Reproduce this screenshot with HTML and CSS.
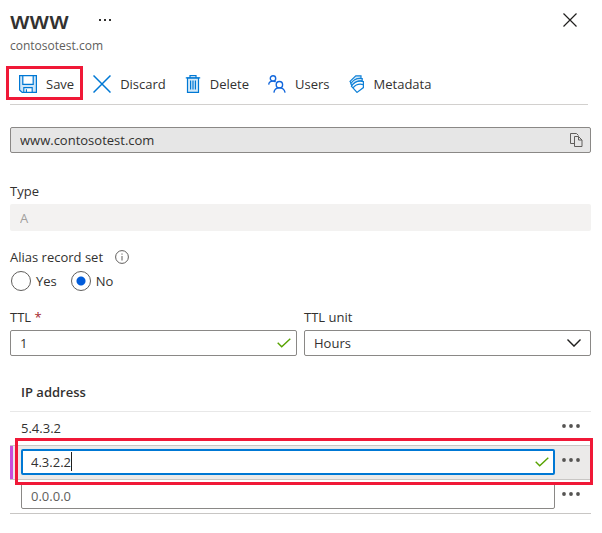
FILE: index.html
```html
<!DOCTYPE html>
<html lang="en">
<head>
<meta charset="utf-8">
<title>www - contosotest.com</title>
<link rel="stylesheet" href="styles.css">
</head>
<body>
<main class="blade">
  <header class="header">
    <div class="title-row">
      <h1 class="title">www</h1>
      <button class="more" type="button" aria-label="More options">
        <svg width="14" height="4" viewBox="0 0 14 4" fill="#323130"><rect x="1" y="1" width="2" height="2"/><rect x="6" y="1" width="2" height="2"/><rect x="11" y="1" width="2" height="2"/></svg>
      </button>
      <button class="close" type="button" aria-label="Close">
        <svg width="14" height="14" viewBox="0 0 14 14" fill="none" stroke="#201f1e" stroke-width="1.2"><path d="M.5.5l13 13M13.5.5l-13 13"/></svg>
      </button>
    </div>
    <p class="subtitle">contosotest.com</p>
  </header>

  <div class="toolbar" role="toolbar" aria-label="Record set commands">
    <button class="command highlighted" type="button">
      <svg width="18" height="18" viewBox="0 0 18 18" fill="none" stroke="#0078d4" stroke-width="1.2"><path fill="#cfe6f8" stroke="none" d="M1 1h3v9h10V1h3v16h-3v-5H4v5H1z"/><path d="M.6.6h16.8v16.8H3.2L.6 15zM3.8.6v8.8h10.4V.6M4.8 17v-4.4h8.4V17M7.4 14.2V17"/></svg>
      <span>Save</span>
    </button>
    <button class="command" type="button">
      <svg width="18" height="18" viewBox="0 0 18 18" fill="none" stroke="#0078d4" stroke-width="1.5"><path d="M.5.5l17 17M17.5.5l-17 17"/></svg>
      <span>Discard</span>
    </button>
    <button class="command" type="button">
      <svg width="16" height="18" viewBox="0 0 16 18" fill="none" stroke="#0078d4" stroke-width="1.2"><path fill="#d5eaf9" d="M2.5 3h11v14.4h-11z"/><path d="M.8 2.8h14.4M5 2.6V.6h6v2M5.6 5.6v9M8 5.6v9M10.4 5.6v9"/></svg>
      <span>Delete</span>
    </button>
    <button class="command" type="button">
      <svg width="18" height="18" viewBox="0 0 18 18" fill="none" stroke="#1267dc" stroke-width="1.4"><circle cx="5" cy="3.4" r="2.7"/><path d="M.7 9.600C.9 7.400 2.600 6.100 5 6.100c1 0 1.800.200 2.600.800"/><circle cx="11.400" cy="9.700" r="3.200"/><path d="M5.900 17.600c.400-2.800 2.700-4.700 5.500-4.700s5.100 1.900 5.700 4.700"/></svg>
      <span>Users</span>
    </button>
    <button class="command" type="button">
      <svg width="16" height="18" viewBox="0 0 16 18" fill="none" stroke="#0f80d7" stroke-width="1.2"><path fill="#d5eaf9" d="M1 6.400L6.800.800h5.200v2.400C8 3.200 4.600 5 2.600 9.200z"/><path fill="#d5eaf9" d="M1.800 8.800C4 4.800 8 3 13.200 3.600v2.400C9 5.600 5.800 7.200 3.400 11.400z"/><path fill="#fff" d="M2.400 11.200C5 7.200 9 5.400 14.400 6.600v6L8 17.400z"/><path d="M4 12.800c2.600-3.200 5.800-4.400 10.400-3.200"/></svg>
      <span>Metadata</span>
    </button>
  </div>

  <form class="form">
    <div class="box copy-box">
      <input class="box-input" type="text" value="www.contosotest.com" readonly aria-label="Record set name">
      <button class="icon-button" type="button" aria-label="Copy to clipboard">
        <svg width="13" height="14" viewBox="0 0 13 14" fill="none" stroke="#605e5c"><path d="M4 10.5H.5v-10h6l2 2M4.500 3.500h4l3.500 3.500v6.500h-7.500zM8.500 3.500v3.500h3.500"/></svg>
      </button>
    </div>

    <div class="field type-field">
      <label class="label" for="type">Type</label>
      <input class="disabled-input" id="type" type="text" value="A" disabled>
    </div>

    <fieldset class="alias">
      <legend class="label legend">Alias record set
        <svg class="info" width="14" height="14" viewBox="0 0 14 14" fill="none" stroke="#605e5c"><circle cx="7" cy="7" r="6.400"/><path d="M7 6v4.500M7 3.500v1.200"/></svg>
      </legend>
      <div class="radios">
        <label class="radio"><input type="radio" name="alias" value="yes">Yes</label>
        <label class="radio"><input type="radio" name="alias" value="no" checked>No</label>
      </div>
    </fieldset>

    <div class="ttl">
      <div class="field">
        <label class="label" for="ttl">TTL <span class="required">*</span></label>
        <div class="box">
          <input class="box-input" id="ttl" type="text" value="1">
          <svg class="check" width="14" height="10" viewBox="0 0 14 10" fill="none" stroke="#57a300" stroke-width="1.4"><path d="M.7 4.800l4 4L13.300.700"/></svg>
        </div>
      </div>
      <div class="field">
        <label class="label" for="unit">TTL unit</label>
        <div class="box">
          <select class="box-input" id="unit"><option>Hours</option></select>
          <svg class="chevron" width="14" height="8" viewBox="0 0 14 8" fill="none" stroke="#201f1e" stroke-width="1.400"><path d="M.5.600L7 7.100 13.500.600"/></svg>
        </div>
      </div>
    </div>

    <table class="records">
      <thead>
        <tr><th colspan="2" scope="col">IP address</th></tr>
      </thead>
      <tbody>
        <tr>
          <td class="address">5.4.3.2</td>
          <td class="actions"><button class="row-menu" type="button" aria-label="Row menu"><svg width="18" height="4" viewBox="0 0 18 4" fill="#555452"><circle cx="2" cy="2" r="1.900"/><circle cx="9" cy="2" r="1.900"/><circle cx="16" cy="2" r="1.900"/></svg></button></td>
        </tr>
        <tr class="editing">
          <td class="address">
            <div class="box focused">
              <input class="box-input" type="text" value="4.3.2.2" aria-label="IP address 2">
              <span class="caret"></span>
              <svg class="check" width="14" height="10" viewBox="0 0 14 10" fill="none" stroke="#57a300" stroke-width="1.400"><path d="M.7 4.800l4 4L13.300.700"/></svg>
            </div>
          </td>
          <td class="actions"><button class="row-menu" type="button" aria-label="Row menu"><svg width="18" height="4" viewBox="0 0 18 4" fill="#555452"><circle cx="2" cy="2" r="1.900"/><circle cx="9" cy="2" r="1.900"/><circle cx="16" cy="2" r="1.900"/></svg></button></td>
        </tr>
        <tr>
          <td class="address">
            <div class="box">
              <input class="box-input" type="text" placeholder="0.0.0.0" aria-label="New IP address">
            </div>
          </td>
          <td class="actions"><button class="row-menu" type="button" aria-label="Row menu"><svg width="18" height="4" viewBox="0 0 18 4" fill="#555452"><circle cx="2" cy="2" r="1.900"/><circle cx="9" cy="2" r="1.900"/><circle cx="16" cy="2" r="1.900"/></svg></button></td>
        </tr>
      </tbody>
    </table>
  </form>
</main>
</body>
</html>
```
FILE: styles.css
```css
*,
*::after {
  box-sizing: border-box;
}

body {
  margin: 0;
  background: #fff;
  color: #323130;
  font: 13px/20px "Open Sans", "Noto Sans", sans-serif;
}

button,
input,
select {
  margin: 0;
  padding: 0;
  border: 0;
  background: none;
  color: inherit;
  font: inherit;
}

svg {
  display: block;
  flex: none;
}

.blade {
  padding: 4px 11px 16px 10px;
}

.title-row {
  display: flex;
  align-items: center;
  height: 32px;
}

.title {
  margin: 0;
  font-size: 24px;
  line-height: 32px;
  font-weight: 600;
}

.more {
  margin-left: 29px;
}

.close {
  margin-left: auto;
  margin-right: 14px;
}

.subtitle {
  margin: 0;
  color: #605e5c;
  font-size: 12px;
}

.toolbar {
  display: flex;
  align-items: center;
  gap: 19px;
  height: 41px;
  margin: 8px 3px 0 0;
  padding-left: 9px;
  border-bottom: 1px solid #d2d0ce;
}

.command {
  position: relative;
  display: flex;
  align-items: center;
  gap: 9px;
}

.highlighted::after {
  content: "";
  position: absolute;
  inset: -8px -9px -6px -13px;
  border: 3px solid #f01837;
}

.form {
  padding-top: 22px;
}

.box {
  position: relative;
  display: flex;
  align-items: center;
  height: 26px;
  border: 1px solid #8a8886;
  border-radius: 2px;
  background: #fff;
}

.box-input {
  flex: 1;
  min-width: 0;
  height: 24px;
  padding: 0 9px;
  outline: 0;
  appearance: none;
}

.box-input::placeholder {
  color: #605e5c;
  opacity: 1;
}

.copy-box {
  background: #e6e6e6;
}

.icon-button {
  margin-right: 7px;
}

.label {
  display: block;
  height: 23px;
}

.type-field {
  margin-top: 28px;
}

.disabled-input {
  display: block;
  width: 100%;
  height: 27px;
  padding: 0 10px;
  border-radius: 2px;
  background: #f3f2f1;
  color: #a19f9d;
}

.alias {
  margin: 16px 0 0;
  padding: 0;
  border: 0;
}

.legend {
  display: flex;
  gap: 12px;
  height: 24px;
  padding: 0;
}

.info {
  margin-top: 3px;
}

.radios {
  display: flex;
  gap: 14px;
  padding-left: 1px;
}

.radio {
  display: flex;
  align-items: center;
  gap: 5px;
}

.radio input {
  width: 20px;
  height: 20px;
  border: 1px solid #605e5c;
  border-radius: 50%;
  appearance: none;
}

.radio input:checked {
  background: radial-gradient(circle, #015cda 4px, transparent 5px);
}

.ttl {
  display: grid;
  grid-template-columns: 1fr 1fr;
  gap: 7px;
  margin-top: 16px;
}

.required {
  color: #a4262c;
}

.check {
  margin-right: 5px;
}

.chevron {
  margin-right: 9px;
}

.records {
  position: relative;
  width: 100%;
  margin-top: 18px;
  border-collapse: separate;
  border-spacing: 0;
}

.records th {
  height: 38px;
  padding: 0 11px 2px;
  border-bottom: 1px solid #e8e8e8;
  text-align: left;
  font-weight: 600;
}

.records td {
  height: 34px;
  padding: 0 0 1px;
  border-bottom: 1px solid #c8c6c4;
}

.records .address {
  padding-left: 11px;
}

.records .actions {
  width: 36px;
  padding-left: 7px;
}

.row-menu {
  display: block;
  padding-bottom: 5px;
}

.editing td {
  background: #ebeae9;
}

.editing td:first-child {
  box-shadow: inset 3px 0 #c94fdb;
}

.editing::after {
  content: "";
  position: absolute;
  z-index: 1;
  top: 64px;
  right: -2px;
  left: 5px;
  height: 47px;
  border: 3px solid #f01837;
  pointer-events: none;
}

.focused {
  border: 2px solid #0078d4;
}

.focused .box-input {
  height: 22px;
  padding: 0 8px;
}

.focused .check {
  margin-right: 4px;
}

.caret {
  position: absolute;
  top: 1px;
  left: 48px;
  width: 1px;
  height: 19px;
  background: #201f1e;
}
```
